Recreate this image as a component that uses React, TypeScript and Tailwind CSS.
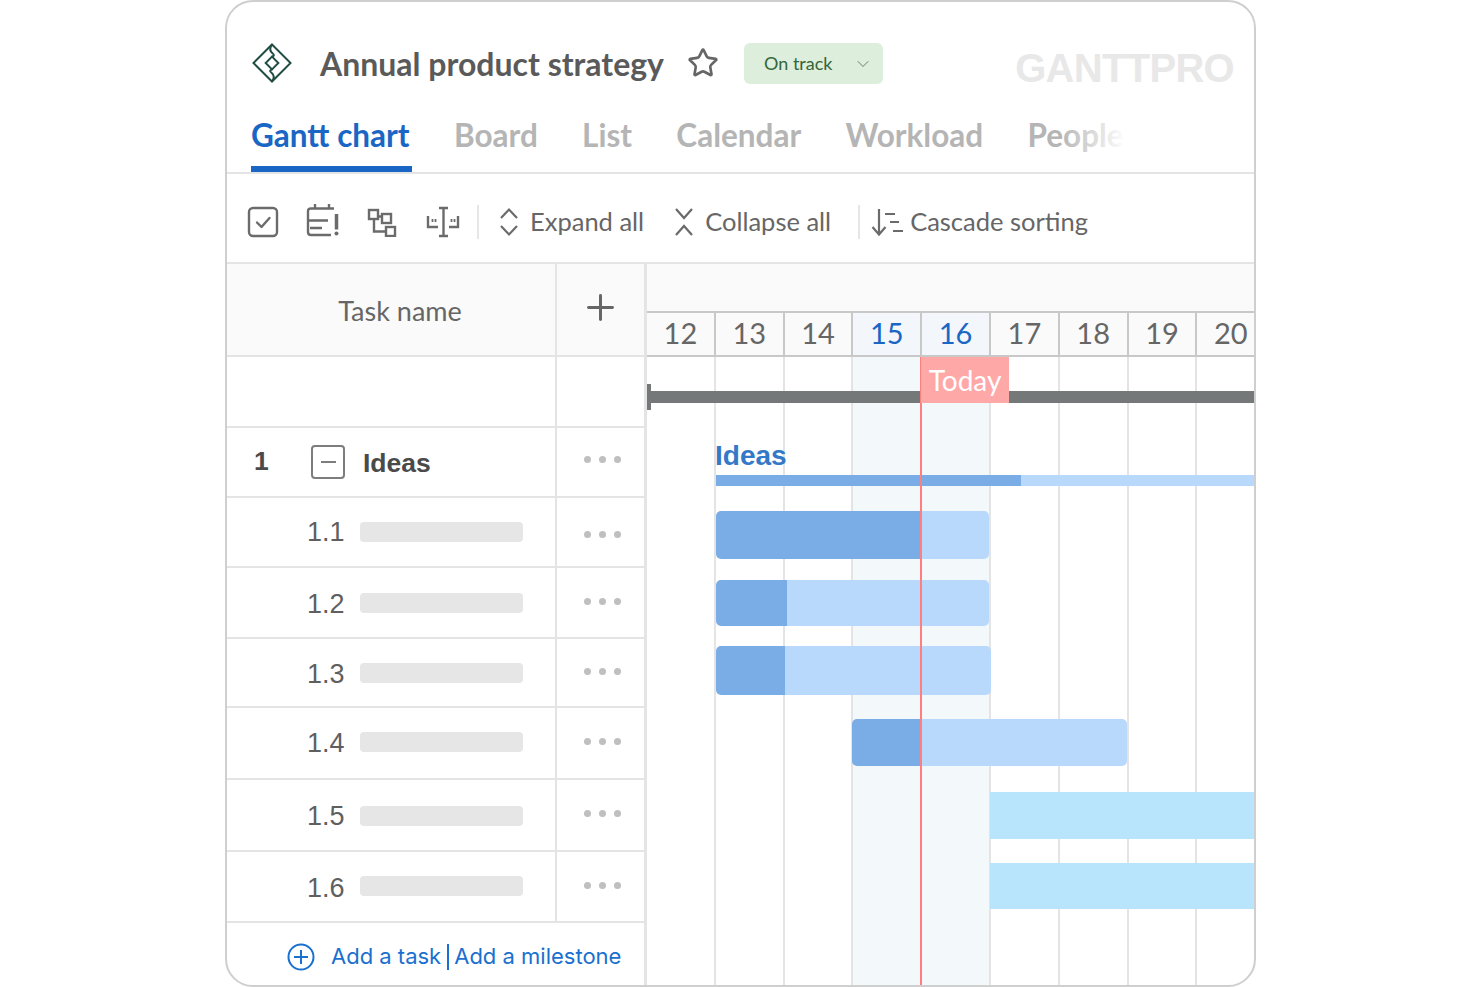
import { ReactNode } from 'react';
import { Star, ChevronDown, Plus } from 'lucide-react';

const tabs = ['Board', 'List', 'Calendar', 'Workload', 'People'];
const days = [12, 13, 14, 15, 16, 17, 18, 19, 20];

const rows = [
  { id: '1.1', rowClass: 'h-[70px]', dotsClass: 'mt-[5px]', labelClass: 'mt-[1px]', barClass: 'mt-[0px]' },
  { id: '1.2', rowClass: 'h-[71px]', dotsClass: 'mt-[-3px]', labelClass: 'mt-[4px]', barClass: 'mt-[0px]' },
  { id: '1.3', rowClass: 'h-[69px]', dotsClass: 'mt-[-3px]', labelClass: 'mt-[4px]', barClass: 'mt-[0px]' },
  { id: '1.4', rowClass: 'h-[72px]', dotsClass: 'mt-[-3px]', labelClass: 'mt-[0px]', barClass: 'mt-[-2px]' },
  { id: '1.5', rowClass: 'h-[72px]', dotsClass: 'mt-[-3px]', labelClass: 'mt-[2px]', barClass: 'mt-[2px]' },
  { id: '1.6', rowClass: 'h-[71px]', dotsClass: 'mt-[-3px]', labelClass: 'mt-[4px]', barClass: 'mt-[-2px]' },
];

function Logo() {
  return (
    <svg width="40" height="40" viewBox="0 0 41 41" fill="none" stroke="#1f4d43" strokeWidth="2">
      <path d="M20.5 1.500 39.500 20.500 20.500 39.500 1.500 20.500Z" />
      <path d="M20.5 14 27 20.500 20.500 27 14 20.500Z" />
      <path d="M20.5 1.500C18 5 18 8 21 10.500C23.500 12.500 22.500 13 20.500 14M20.5 39.500C23 36 23 33 20 30.500C17.500 28.500 18.500 28 20.500 27" />
    </svg>
  );
}

function Dots({ className }: { className: string }) {
  return (
    <div className={`flex gap-[8px] ${className}`}>
      <span className="h-[7px] w-[7px] rounded-full bg-[#bfbfbf]" />
      <span className="h-[7px] w-[7px] rounded-full bg-[#bfbfbf]" />
      <span className="h-[7px] w-[7px] rounded-full bg-[#bfbfbf]" />
    </div>
  );
}

function ToolText({ children }: { children: ReactNode }) {
  return <span className="whitespace-nowrap text-[25.5px] leading-none text-[#666666]">{children}</span>;
}

function Toolbar() {
  return (
    <div className="flex h-[90px] shrink-0 items-center border-b-2 border-[#e4e4e4] pl-[20px] pt-[8px]">
      <svg width="32" height="32" viewBox="0 0 32 32" fill="none" stroke="#6b6b6b" strokeWidth="2.400">
        <rect x="2" y="2" width="28" height="28" rx="4" />
        <path d="M10 16.500 14.500 21 22.500 12" strokeLinecap="round" strokeLinejoin="round" />
      </svg>
      <svg width="34" height="36" viewBox="0 0 34 36" fill="none" stroke="#6b6b6b" strokeWidth="2.400" className="ml-[27px]">
        <path d="M28 4.500H5Q2 4.500 2 7.500V28Q2 31 5 31H25" />
        <path d="M9 0V4.500M23 0V4.500M2 16.500H22M4 24H16" />
        <path d="M30.500 10V25.500" strokeWidth="3.500" />
        <circle cx="30.500" cy="29.500" r="2" fill="#6b6b6b" stroke="none" />
      </svg>
      <svg width="30" height="30" viewBox="0 0 30 30" fill="none" stroke="#6b6b6b" strokeWidth="2.400" className="ml-[27px]">
        <rect x="2" y="3" width="9" height="9" />
        <rect x="15" y="7" width="9" height="9" />
        <rect x="19" y="20" width="9" height="9" />
        <path d="M7 12V24.500H19M11 9.500H15" />
      </svg>
      <svg width="34" height="32" viewBox="0 0 34 32" fill="none" stroke="#6b6b6b" strokeWidth="2.400" className="ml-[29px]">
        <path d="M13 2H22M13 30H22M17.500 2V30" />
        <path d="M2 10V21H12M23 21H32V10" />
        <path d="M6.500 13V16M9.500 13V16M25.500 13V16M28.500 13V16" strokeWidth="1.800" />
      </svg>
      <span className="ml-[17px] h-[34px] w-[2px] bg-[#e6e6e6]" />
      <svg width="22" height="30" viewBox="0 0 22 30" fill="none" stroke="#6b6b6b" strokeWidth="2.200" className="ml-[19px]">
        <path d="M3 11 11 2.500 19 11M3 19 11 27.500 19 19" />
      </svg>
      <span className="ml-[10px] mt-[1px]"><ToolText>Expand all</ToolText></span>
      <svg width="22" height="30" viewBox="0 0 22 30" fill="none" stroke="#6b6b6b" strokeWidth="2.200" className="ml-[29px]">
        <path d="M3 2 11 11 19 2M3 28 11 19 19 28" />
      </svg>
      <span className="ml-[10px] mt-[1px]"><ToolText>Collapse all</ToolText></span>
      <span className="ml-[27px] h-[34px] w-[2px] bg-[#e6e6e6]" />
      <svg width="34" height="30" viewBox="0 0 34 30" fill="none" stroke="#6b6b6b" strokeWidth="2.200" className="ml-[11px]">
        <path d="M8 2V27.500M1.500 20 8 27.500 14.500 20" />
        <path d="M14 7H24M19 15H28M22 24H32" />
      </svg>
      <span className="ml-[5px] mt-[1px]"><ToolText>Cascade sorting</ToolText></span>
    </div>
  );
}

function TaskTable() {
  return (
    <div className="flex w-[420px] shrink-0 flex-col border-r-[3px] border-[#e4e4e4]">
      <div className="flex h-[93px] shrink-0 border-b-2 border-[#e4e4e4] bg-[#fafafa]">
        <div className="flex w-[330px] items-center justify-center border-r-2 border-[#e4e4e4] pl-[18px] pt-[3px] text-[27px] text-[#666666]">Task name</div>
        <div className="flex flex-1 items-start justify-center pt-[23px]">
          <Plus size={41} strokeWidth={1.750} color="#666666" />
        </div>
      </div>
      <div className="flex h-[71px] shrink-0 border-b-2 border-[#e4e4e4]">
        <div className="w-[330px] border-r-2 border-[#e4e4e4]" />
      </div>
      <div className="flex h-[70px] shrink-0 border-b-2 border-[#e4e4e4]">
        <div className="flex w-[330px] items-center border-r-2 border-[#e4e4e4] pl-[27px] font-['Liberation_Sans',sans-serif] text-[26.5px] font-bold text-[#4a4a4a]">
          <span className="w-[57px]">1</span>
          <span className="flex h-[34px] w-[34px] items-center justify-center rounded-[4px] border-2 border-[#7d7d7d]">
            <span className="h-[2px] w-[15px] bg-[#7d7d7d]" />
          </span>
          <span className="ml-[18px] mt-[3px]">Ideas</span>
        </div>
        <div className="flex flex-1 items-center pl-[27px]">
          <Dots className="mt-[-5px]" />
        </div>
      </div>
      {rows.map((row) => (
        <div key={row.id} className={`flex shrink-0 border-b-2 border-[#e4e4e4] ${row.rowClass}`}>
          <div className="flex w-[330px] items-center border-r-2 border-[#e4e4e4] pl-[80px]">
            <span className={`w-[53px] font-['Liberation_Sans',sans-serif] text-[27px] text-[#5f5f5f] ${row.labelClass}`}>{row.id}</span>
            <span className={`h-[20px] w-[163px] rounded-[4px] bg-[#e6e6e6] ${row.barClass}`} />
          </div>
          <div className="flex flex-1 items-center pl-[27px]">
            <Dots className={row.dotsClass} />
          </div>
        </div>
      ))}
      <div className="flex flex-1 items-center whitespace-nowrap pl-[60px] pt-[5px] font-['Inter',sans-serif] text-[22px] text-[#1a70cf]">
        <svg width="28" height="28" viewBox="0 0 28 28" fill="none" stroke="#1a70cf" strokeWidth="2">
          <circle cx="14" cy="14" r="12.500" />
          <path d="M14 7V21M7 14H21" />
        </svg>
        <span className="ml-[16px]">Add a task</span>
        <span className="ml-[6px] mr-[5px] h-[26px] w-[2px] bg-[#1a70cf]" />
        <span>Add a milestone</span>
      </div>
    </div>
  );
}

function TaskBar({ className, doneClass, restClass }: { className: string; doneClass?: string; restClass: string }) {
  return (
    <div className={`flex shrink-0 overflow-hidden ${className}`}>
      {doneClass && <div className={`h-full shrink-0 bg-[#7aade6] ${doneClass}`} />}
      <div className={`h-full flex-1 ${restClass}`} />
    </div>
  );
}

function Timeline() {
  return (
    <div className="relative flex min-w-0 flex-1 flex-col overflow-hidden">
      <div className="h-[47px] shrink-0 bg-[#fafafa]" />
      <div className="flex h-[46px] shrink-0 border-y-2 border-[#c8c8c8] bg-[#fafafa]">
        {days.map((d) => (
          <div
            key={d}
            className={`flex w-[68.8px] shrink-0 items-center justify-center border-r-2 border-[#c8c8c8] pb-[3px] text-[29px] leading-none ${d === 15 || d === 16 ? 'bg-[#f3f7fb] text-[#1a66c4]' : 'text-[#666666]'}`}
          >
            {d}
          </div>
        ))}
      </div>
      <div className="relative flex-1">
        <div className="absolute inset-0 flex">
          {days.map((d) => (
            <div key={d} className={`w-[68.8px] shrink-0 border-r-2 border-[#e4e4e4] ${d === 15 || d === 16 ? 'bg-[#f3f8fb]' : ''}`} />
          ))}
        </div>
        <div className="relative flex flex-col">
          <div className="mt-[34px] h-[12px] shrink-0 bg-[#747878]" />
          <div className="ml-[68px] mt-[38px] h-[29px] font-['Liberation_Sans',sans-serif] text-[28px] font-bold leading-[29px] text-[#3478c8]">Ideas</div>
          <TaskBar className="ml-[69px] mt-[5px] h-[11px]" doneClass="w-[305px]" restClass="bg-[#b8d8fc]" />
          <TaskBar className="ml-[69px] mt-[25px] h-[48px] w-[273px] rounded-[5px]" doneClass="w-[204px]" restClass="bg-[#b8d8fc]" />
          <TaskBar className="ml-[69px] mt-[21px] h-[46px] w-[273px] rounded-[5px]" doneClass="w-[71px]" restClass="bg-[#b8d8fc]" />
          <TaskBar className="ml-[69px] mt-[20px] h-[49px] w-[275px] rounded-[5px]" doneClass="w-[69px]" restClass="bg-[#b8d8fc]" />
          <TaskBar className="ml-[205px] mt-[24px] h-[47px] w-[275px] rounded-[5px]" doneClass="w-[68px]" restClass="bg-[#b8d8fc]" />
          <TaskBar className="ml-[343px] mt-[26px] h-[47px]" restClass="bg-[#b8e4fc]" />
          <TaskBar className="ml-[343px] mt-[24px] h-[46px]" restClass="bg-[#b8e4fc]" />
        </div>
        {/* today marker and project start tick sit over the bars */}
        <div className="absolute bottom-0 left-[273px] top-0 w-[2px] bg-[#ff7f7f]" />
        <div className="absolute left-[274px] top-0 flex h-[46px] w-[88px] items-center justify-center bg-[#ffa8a8] text-[28px] text-white">Today</div>
        <div className="absolute left-0 top-[27px] h-[26px] w-[4px] bg-[#747878]" />
      </div>
    </div>
  );
}

export default function App() {
  return (
    <div className="h-[987px] overflow-hidden bg-white pl-[225px] font-['Lato',sans-serif]">
      <div className="flex h-[987px] w-[1031px] flex-col overflow-hidden rounded-[28px] border-2 border-[#cfcfcf]">
        <div className="flex h-[109px] shrink-0 items-start pl-[25px] pt-[41px]">
          <Logo />
          <span className="ml-[28px] mt-[1px] whitespace-nowrap text-[32px] font-bold leading-[40px] text-[#5a5a5a]">Annual product strategy</span>
          <Star size={32} strokeWidth={2} color="#666666" className="ml-[23px] mt-[4px]" />
          <div className="ml-[25px] flex h-[41px] w-[139px] items-center justify-between rounded-[6px] bg-[#ddeedd] pl-[20px] pr-[10px] text-[18px] text-[#35663a]">
            On track
            <ChevronDown size={20} strokeWidth={1.200} color="#777777" />
          </div>
          <span className="ml-auto mr-[20px] mt-[5px] font-['Liberation_Sans',sans-serif] text-[40px] font-bold leading-[40px] tracking-[-0.7px] text-[#e8e8e8]">GANTTPRO</span>
        </div>
        <div className="relative flex h-[63px] shrink-0 whitespace-nowrap border-b-2 border-[#e4e4e4] pl-[24px] text-[31.500px] font-bold leading-[48px]">
          <span className="h-[61px] w-[161px] border-b-[6px] border-[#1a66c4] text-[#1a66c4]">Gantt chart</span>
          {tabs.map((t, i) => (
            <span key={t} className={`text-[#b5b5b5] ${i === 0 ? 'ml-[42px]' : 'ml-[44.300px]'}`}>{t}</span>
          ))}
          <div className="absolute left-[833px] top-0 h-[52px] w-[66px] bg-gradient-to-r from-white/0 to-white" />
        </div>
        <Toolbar />
        <div className="flex min-h-0 flex-1">
          <TaskTable />
          <Timeline />
        </div>
      </div>
    </div>
  );
}
